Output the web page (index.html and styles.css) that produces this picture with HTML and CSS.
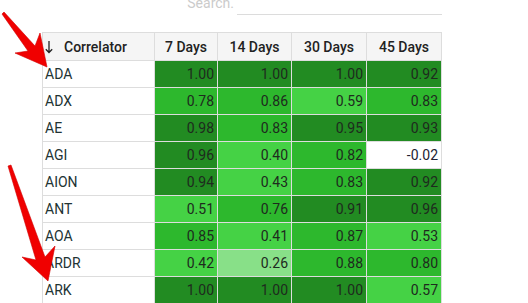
FILE: index.html
```html
<!DOCTYPE html>
<html>
<head>
<meta charset="utf-8">
<link rel="stylesheet" href="styles.css">
</head>
<body>
<div class="page">
  <div class="search">
    <span class="search-label">Search.</span>
    <div class="search-input"></div>
  </div>
  <div class="grid">
    <div class="h first"><svg class="sort" width="8" height="14" viewBox="0 0 8 14"><path d="M4 1 V12.5 M0.8 9.3 L4 12.5 L7.2 9.3" fill="none" stroke="#222" stroke-width="1.3"/></svg>Correlator</div>
    <div class="h">7 Days</div>
    <div class="h">14 Days</div>
    <div class="h">30 Days</div>
    <div class="h">45 Days</div>

    <div class="name">ADA</div><div class="v c1">1.00</div><div class="v c1">1.00</div><div class="v c1">1.00</div><div class="v c1">0.92</div>
    <div class="name">ADX</div><div class="v c2">0.78</div><div class="v c2">0.86</div><div class="v c3">0.59</div><div class="v c2">0.83</div>
    <div class="name">AE</div><div class="v c1">0.98</div><div class="v c2">0.83</div><div class="v c1">0.95</div><div class="v c1">0.93</div>
    <div class="name">AGI</div><div class="v c1">0.96</div><div class="v c3">0.40</div><div class="v c2">0.82</div><div class="v c0">-0.02</div>
    <div class="name">AION</div><div class="v c1">0.94</div><div class="v c3">0.43</div><div class="v c2">0.83</div><div class="v c1">0.92</div>
    <div class="name">ANT</div><div class="v c3">0.51</div><div class="v c2">0.76</div><div class="v c1">0.91</div><div class="v c1">0.96</div>
    <div class="name">AOA</div><div class="v c2">0.85</div><div class="v c3">0.41</div><div class="v c2">0.87</div><div class="v c3">0.53</div>
    <div class="name">ARDR</div><div class="v c3">0.42</div><div class="v c4">0.26</div><div class="v c2">0.88</div><div class="v c2">0.80</div>
    <div class="name">ARK</div><div class="v c1">1.00</div><div class="v c1">1.00</div><div class="v c1">1.00</div><div class="v c3">0.57</div>
  </div>
</div>
<svg class="arrows" width="528" height="303" viewBox="0 0 528 303">
  <polygon points="2,14 4,12 35,46 40,33 47,67 15,53 28,51" fill="#f00000" stroke="#d00000" stroke-width="0.6" stroke-linejoin="round"/>
  <polygon points="8,166 11,165 45,257 55,246 48,281 22,257 36,260" fill="#f00000" stroke="#d00000" stroke-width="0.6" stroke-linejoin="round"/>
</svg>
</body>
</html>
```

FILE: styles.css
```css
html, body {
  margin: 0;
  padding: 0;
  background: #fff;
  font-family: Roboto, "Liberation Sans", sans-serif;
  font-size: 14px;
  color: #222;
  overflow: hidden;
}
.page {
  width: 400px;
  margin-left: 42px;
}
.search {
  display: flex;
  justify-content: flex-end;
  align-items: flex-start;
  height: 15px;
  margin-bottom: 17px;
}
.search-label {
  color: #cbcbcb;
  font-size: 14px;
  line-height: 14px;
  margin-top: -4px;
  margin-right: 3px;
}
.search-input {
  width: 205px;
  height: 14px;
  border-bottom: 1px solid #dcdcdc;
}
.grid {
  display: grid;
  grid-template-columns: 111px 62px 73px 74px 74px;
  grid-template-rows: 27px;
  grid-auto-rows: 26px;
  gap: 1px;
  background: #dddddd;
  border: 1px solid #dddddd;
}
.h {
  background: #f5f5f5;
  font-weight: 500;
  color: #222;
  display: flex;
  align-items: center;
  justify-content: center;
}
.h.first {
  justify-content: flex-start;
  padding-left: 2px;
}
.sort {
  display: block;
  margin-right: 11px;
  margin-top: 1px;
}
.name {
  background: #fff;
  display: flex;
  align-items: center;
  padding-left: 2px;
  color: #233;
}
.v {
  display: flex;
  align-items: center;
  justify-content: flex-end;
  padding-right: 3px;
  color: #1e2a1e;
}
.c0 { background: #ffffff; color: #223; }
.c1 { background: #228b22; }
.c2 { background: #2db82d; }
.c3 { background: #45d245; }
.c4 { background: #88e088; }
.arrows {
  position: absolute;
  left: 0;
  top: 0;
  pointer-events: none;
}
```
